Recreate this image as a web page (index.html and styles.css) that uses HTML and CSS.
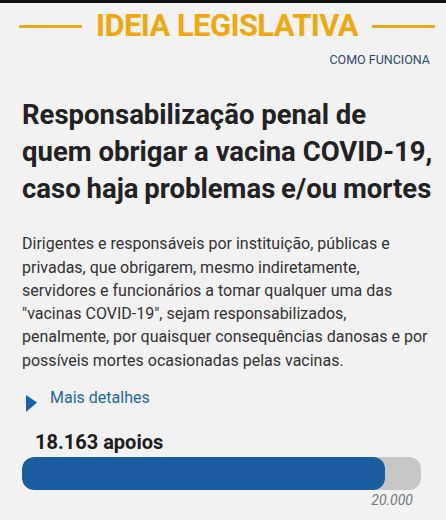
FILE: index.html
```html
<!DOCTYPE html>
<html lang="pt">
<head>
<meta charset="utf-8">
<link rel="stylesheet" href="styles.css">
</head>
<body>
<div class="topbar"></div>
<header class="brand">
  <span class="rule"></span>
  <h1 class="brand-title">IDEIA LEGISLATIVA</h1>
  <span class="rule"></span>
</header>
<nav class="subnav"><a class="how" href="#">COMO FUNCIONA</a></nav>
<main class="content">
  <h2 class="idea-title"><span class="ln">Responsabilização penal de</span> <span class="ln">quem obrigar a vacina COVID-19,</span> <span class="ln ln-tight">caso haja problemas e/ou mortes</span></h2>
  <p class="idea-text">Dirigentes e responsáveis por instituição, públicas e privadas, que obrigarem, mesmo indiretamente, servidores e funcionários a tomar qualquer uma das "vacinas COVID-19", sejam responsabilizados, penalmente, por quaisquer consequências danosas e por possíveis mortes ocasionadas pelas vacinas.</p>
  <div class="details">
    <svg class="tri" width="11" height="17" viewBox="0 0 11 17"><path d="M0 0 L11 7.5 L0 17 Z" fill="#1565a6"/></svg>
    <span class="details-link">Mais detalhes</span>
  </div>
  <div class="support">18.163 apoios</div>
  <div class="bar"><div class="fill" style="width:91%"></div></div>
  <div class="goal">20.000</div>
</main>
</body>
</html>
```
FILE: styles.css
```css
html, body { margin: 0; padding: 0; }
body {
  background: #f2f2f2;
  font-family: Roboto, "Liberation Sans", sans-serif;
  width: 446px;
  height: 520px;
  overflow: hidden;
}
.topbar { height: 3px; background: #111; }
.brand {
  display: flex;
  align-items: center;
  justify-content: center;
  gap: 14px;
  padding: 5px 0 0 8px;
  height: 36px;
}
.rule { width: 63px; height: 3px; background: #e8a917; border-radius: 1px; flex: none; }
.brand-title {
  margin: 0;
  font-size: 31px;
  font-weight: 700;
  color: #f0a80f;
  letter-spacing: -0.6px;
  line-height: 36px;
  white-space: nowrap;
}
.subnav {
  display: flex;
  justify-content: flex-end;
  padding: 8px 16px 0 0;
  height: 16px;
}
.how {
  color: #2b4a6a;
  font-size: 12.5px;
  text-decoration: none;
  line-height: 16px;
}
.content { padding: 0 12px 0 22px; }
.idea-title {
  margin: 27.6px 0 0;
  font-size: 27.5px;
  line-height: 37px;
  font-weight: 700;
  color: #222;
}
.ln { display: block; white-space: nowrap; }
.ln-tight { word-spacing: -1px; }
.idea-text {
  margin: 25.7px 0 0;
  font-size: 16px;
  line-height: 23.3px;
  color: #333;
}
.details {
  display: flex;
  align-items: flex-start;
  gap: 13px;
  margin-top: 15.6px;
  padding-left: 4px;
  height: 20px;
}
.tri { margin-top: 7.3px; flex: none; }
.details-link { color: #2369a0; font-size: 16px; line-height: 20px; }
.support {
  margin: 22.6px 0 0 13px;
  font-size: 20px;
  font-weight: 700;
  color: #1d1d1d;
  line-height: 24px;
}
.bar {
  margin-top: 2.7px;
  width: 399px;
  height: 33px;
  background: #c6c6c6;
  border-radius: 12px;
  overflow: hidden;
}
.fill { height: 100%; background: #1a5e9f; border-radius: 12px; }
.goal {
  width: 391px;
  text-align: right;
  font-style: italic;
  font-size: 14px;
  line-height: 16px;
  color: #777;
  margin-top: 2px;
}
```
